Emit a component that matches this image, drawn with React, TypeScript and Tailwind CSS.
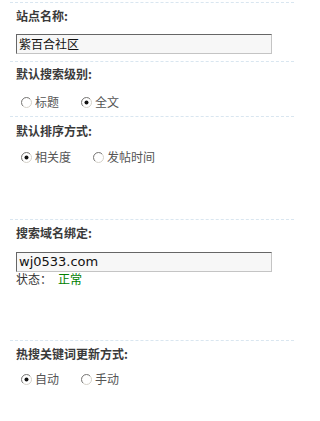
import React from 'react';

// Dashed separator between setting groups
function Divider({ className = '' }: { className?: string }) {
  return <div className={`ml-[10px] border-t border-dashed border-[#d9e6f0] ${className}`} />;
}

function Heading({ children, className = '' }: { children: React.ReactNode; className?: string }) {
  return (
    <div className={`pl-4 h-[20px] leading-[20px] text-[12px] font-bold text-[#3a3a3a] ${className}`}>
      {children}
    </div>
  );
}

function Radio({ checked, label }: { checked?: boolean; label: string }) {
  return (
    <label className="flex items-center mr-[22px]">
      <svg width="11" height="11" viewBox="0 0 11 11" className="mr-[3px]">
        <circle cx="5.5" cy="5.5" r="5" fill="#fff" stroke="#d4d0c8" />
        <path d="M1.96 9.04 A5 5 0 0 1 9.04 1.96" stroke="#808080" fill="none" />
        {checked && <circle cx="5.5" cy="5.5" r="2" fill="#111" />}
      </svg>
      <span className="text-[12px] leading-[20px] text-[#555]">{label}</span>
    </label>
  );
}

function TextBox({ value, className = '' }: { value: string; className?: string }) {
  return (
    <div
      className={`ml-4 w-[256px] h-[20px] pl-[2px] leading-[18px] text-[#111] bg-[#f7f7f7] border border-t-[#666] border-l-[#666] border-r-[#c4c4c4] border-b-[#c4c4c4] ${className}`}
    >
      {value}
    </div>
  );
}

export default function App() {
  return (
    <div className="w-[294px] h-[421px] overflow-hidden bg-white pt-[2px] font-['Noto_Sans_CJK_SC',sans-serif]">
      {/* 站点名称 */}
      <Divider />
      <Heading className="mt-[3px]">站点名称:</Heading>
      <TextBox value="紫百合社区" className="mt-[8px] text-[12px]" />

      {/* 默认搜索级别 */}
      <Divider className="mt-[7px]" />
      <Heading className="mt-[2px]">默认搜索级别:</Heading>
      <div className="flex h-[20px] pl-[21px] mt-[8px]">
        <Radio label="标题" />
        <Radio label="全文" checked />
      </div>

      {/* 默认排序方式 */}
      <Divider className="mt-[4px]" />
      <Heading className="mt-[4px]">默认排序方式:</Heading>
      <div className="flex h-[20px] pl-[21px] mt-[6px]">
        <Radio label="相关度" checked />
        <Radio label="发帖时间" />
      </div>

      {/* 搜索域名绑定 */}
      <Divider className="mt-[52px]" />
      <Heading className="mt-[3px]">搜索域名绑定:</Heading>
      <TextBox value="wj0533.com" className="mt-[9px] font-['DejaVu_Sans',sans-serif] text-[13px]" />
      <div className="pl-4 h-[14px] leading-[14px] text-[12px] text-[#333] flex">
        <span>状态：</span>
        <span className="ml-[6px] text-[#008000]">正常</span>
      </div>

      {/* 热搜关键词更新方式 */}
      <Divider className="mt-[54px]" />
      <Heading className="mt-[3px]">热搜关键词更新方式:</Heading>
      <div className="flex h-[20px] pl-[21px] mt-[5px]">
        <Radio label="自动" checked />
        <Radio label="手动" />
      </div>
    </div>
  );
}
